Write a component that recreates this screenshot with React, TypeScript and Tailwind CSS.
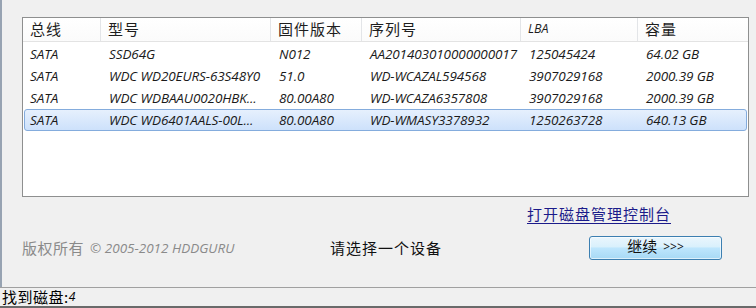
import React from "react";

const rows = [
  ["SATA", "SSD64G", "N012", "AA201403010000000017", "125045424", "64.02 GB"],
  ["SATA", "WDC WD20EURS-63S48Y0", "51.0", "WD-WCAZAL594568", "3907029168", "2000.39 GB"],
  ["SATA", "WDC WDBAAU0020HBK...", "80.00A80", "WD-WCAZA6357808", "3907029168", "2000.39 GB"],
  ["SATA", "WDC WD6401AALS-00L...", "80.00A80", "WD-WMASY3378932", "1250263728", "640.13 GB"],
];

const headers = ["总线", "型号", "固件版本", "序列号", "LBA", "容量"];

const cjk = { fontFamily: '"Noto Sans CJK SC", "Noto Sans", sans-serif' };
const latin = { fontFamily: '"Open Sans", "Noto Sans", sans-serif' };

export default function App() {
  return (
    <div className="w-[756px] h-[308px] bg-[#f0f0f0] flex flex-col overflow-hidden">
      <div className="h-[287px] border-l-2 border-[#97a3b2] flex flex-col">
        {/* list view */}
        <div className="ml-[20px] mt-[17px] w-[727px] h-[180px] border border-[#8e8f8f] bg-white flex flex-col">
          <div className="grid grid-cols-[78px_170px_91px_159px_117px_1fr] h-[24px] border-b border-[#e3e3e3] bg-gradient-to-b from-white to-[#fbfbfb]">
            {headers.map((h, i) => (
              <div
                key={i}
                className={`flex items-center pl-[7px] text-[#1e1e1e] ${i < 5 ? "border-r border-[#e3e5e8]" : ""} ${h === "LBA" ? "text-[12.5px] italic" : "text-[15px] tracking-[1px]"}`}
                style={h === "LBA" ? latin : cjk}
              >
                {h}
              </div>
            ))}
          </div>
          <div className="flex flex-col pt-[1px]">
            {rows.map((r, ri) => {
              const sel = ri === 3;
              return (
                <div
                  key={ri}
                  className={`grid grid-cols-[78px_170px_91px_159px_117px_1fr] h-[22px] mx-[1px] ${
                    sel
                      ? "border border-[#84acdd] rounded-[3px] bg-gradient-to-b from-[#e6f0fd] to-[#cde1fb]"
                      : "border border-transparent"
                  }`}
                >
                  {r.map((c, ci) => (
                    <div
                      key={ci}
                      className={`flex items-center italic text-[13.5px] tracking-[-0.1px] text-[#1a1a1a] whitespace-nowrap ${ci === 0 ? "pl-[5px]" : "pl-[6px]"}`}
                      style={latin}
                    >
                      {c}
                    </div>
                  ))}
                </div>
              );
            })}
          </div>
        </div>

        {/* link row */}
        <div className="flex justify-end pr-[85px] mt-[7px] h-[20px] items-center">
          <span className="text-[15px] tracking-[1px] text-[#1b1b8a] underline underline-offset-[3px] cursor-pointer" style={cjk}>
            打开磁盘管理控制台
          </span>
        </div>

        {/* bottom row */}
        <div className="flex items-center mt-[12px] h-[24px]">
          <div className="w-[328px] pl-[20px] flex items-center text-[#8a8a8a] whitespace-nowrap">
            <span className="text-[15px] tracking-[0.5px]" style={cjk}>版权所有</span>
            <span className="italic text-[13.5px] ml-[6px]" style={latin}>© 2005-2012 HDDGURU</span>
          </div>
          <div className="w-[259px] text-[15px] tracking-[1px] text-[#111]" style={cjk}>
            请选择一个设备
          </div>
          <button className="w-[133px] h-[24px] rounded-[3px] border border-[#3c7fb1] bg-[linear-gradient(to_bottom,#eaf6fd_0%,#d9f0fc_45%,#bee6fd_50%,#a7d9f5_100%)] shadow-[inset_0_0_0_1px_rgba(255,255,255,0.6)] flex items-center justify-center pb-[3px]">
            <span className="text-[15px] text-[#111]" style={cjk}>继续</span>
            <span className="text-[12px] ml-[6px] text-[#111]" style={latin}>&gt;&gt;&gt;</span>
          </button>
        </div>
      </div>

      {/* status bar */}
      <div className="h-[21px] border-t border-[#a0a0a0] border-b-2 border-b-[#6a6a6a] flex items-center pl-[2px] bg-[#f0f0f0]">
        <span className="text-[15px] text-black tracking-[0.5px]" style={cjk}>找到磁盘:</span>
        <span className="text-[12px] italic text-black" style={latin}>4</span>
      </div>
    </div>
  );
}
